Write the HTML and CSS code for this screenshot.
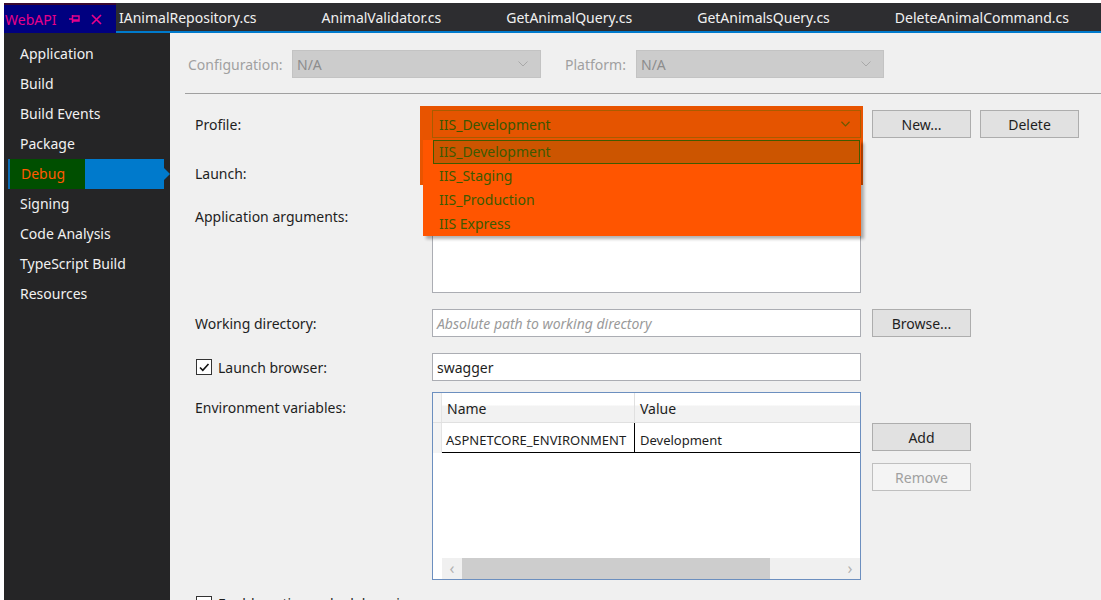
FILE: index.html
```html
<!DOCTYPE html>
<html>
<head>
<meta charset="utf-8">
<link rel="stylesheet" href="styles.css">
</head>
<body>
<div class="window">
  <div class="tabbar">
    <div class="tab-active">
      <span class="tab-active-title">WebAPI</span>
      <svg class="pin" width="13" height="12" viewBox="0 0 13 12"><path d="M1 6h3.5M4.5 2v8M4.5 3h6.5v5H4.5M4.5 7h6.5" stroke="#e8008a" stroke-width="1.5" fill="none"/></svg>
      <svg class="close" width="13" height="13" viewBox="0 0 13 13"><path d="M2 2l9 9M11 2l-9 9" stroke="#e8008a" stroke-width="1.7"/></svg>
    </div>
    <div class="tabs">
      <span class="tab">IAnimalRepository.cs</span>
      <span class="tab">AnimalValidator.cs</span>
      <span class="tab">GetAnimalQuery.cs</span>
      <span class="tab">GetAnimalsQuery.cs</span>
      <span class="tab">DeleteAnimalCommand.cs</span>
    </div>
  </div>
  <div class="main">
    <nav class="sidebar">
      <div class="nav-item">Application</div>
      <div class="nav-item">Build</div>
      <div class="nav-item">Build Events</div>
      <div class="nav-item">Package</div>
      <div class="nav-item nav-selected"><span class="nav-sel-text">Debug</span><span class="nav-arrow"></span></div>
      <div class="nav-item">Signing</div>
      <div class="nav-item">Code Analysis</div>
      <div class="nav-item">TypeScript Build</div>
      <div class="nav-item">Resources</div>
    </nav>
    <section class="content">
      <div class="config-row">
        <span class="dim-label">Configuration:</span>
        <div class="combo combo-disabled combo-config"><span>N/A</span><svg class="chev" width="10" height="6" viewBox="0 0 10 6"><path d="M0.5 0.5l4.5 4.5 4.5-4.5" stroke="#a8a8a8" fill="none"/></svg></div>
        <span class="dim-label platform-label">Platform:</span>
        <div class="combo combo-disabled combo-platform"><span>N/A</span><svg class="chev" width="10" height="6" viewBox="0 0 10 6"><path d="M0.5 0.5l4.5 4.5 4.5-4.5" stroke="#a8a8a8" fill="none"/></svg></div>
      </div>
      <div class="sep"></div>
      <div class="form">
        <div class="row row-profile">
          <span class="label">Profile:</span>
          <div class="combo-slot">
            <div class="profile-glow"></div>
            <div class="combo combo-profile"><span>IIS_Development</span><svg class="chev" width="9" height="6" viewBox="0 0 10 6"><path d="M0.5 0.5l4.5 4.5 4.5-4.5" stroke="#6a5a00" stroke-width="1.3" fill="none"/></svg></div>
            <div class="dropdown">
              <div class="dd-item dd-selected">IIS_Development</div>
              <div class="dd-item">IIS_Staging</div>
              <div class="dd-item">IIS_Production</div>
              <div class="dd-item">IIS Express</div>
            </div>
          </div>
          <button class="btn">New...</button>
          <button class="btn">Delete</button>
        </div>
        <div class="row row-launch">
          <span class="label">Launch:</span>
          <div class="combo combo-plain"></div>
        </div>
        <div class="row row-args">
          <span class="label label-top">Application arguments:</span>
          <div class="textarea"></div>
        </div>
        <div class="row row-wd">
          <span class="label">Working directory:</span>
          <div class="input placeholder">Absolute path to working directory</div>
          <button class="btn">Browse...</button>
        </div>
        <div class="row row-lb">
          <span class="label check-label"><span class="checkbox checked"><svg width="12" height="12" viewBox="0 0 12 12"><path d="M2 6.5l2.8 2.8L10.5 3" stroke="#111" stroke-width="1.6" fill="none"/></svg></span>Launch browser:</span>
          <div class="input">swagger</div>
        </div>
        <div class="row row-env">
          <span class="label label-top">Environment variables:</span>
          <div class="grid">
            <div class="grid-head">
              <div class="rowhead"></div>
              <div class="gh-cell gh-name">Name</div>
              <div class="gh-cell gh-value">Value</div>
            </div>
            <div class="grid-row">
              <div class="rowhead"></div>
              <div class="g-cell g-name">ASPNETCORE_ENVIRONMENT</div>
              <div class="g-cell g-value">Development</div>
            </div>
            <div class="grid-body"></div>
            <div class="hscroll">
              <span class="sc-arrow">&lsaquo;</span>
              <div class="sc-track"><div class="sc-thumb"></div></div>
              <span class="sc-arrow">&rsaquo;</span>
            </div>
          </div>
          <div class="env-buttons">
            <button class="btn">Add</button>
            <button class="btn btn-disabled">Remove</button>
          </div>
        </div>
        <div class="row row-native">
          <span class="label check-label"><span class="checkbox"></span>Enable native code debugging</span>
        </div>
      </div>
    </section>
  </div>
</div>
</body>
</html>
```
FILE: styles.css
```css
* { box-sizing: border-box; }
html, body { margin: 0; padding: 0; background: #ffffff; overflow: hidden; }
body { font-family: "Noto Sans", "Open Sans", sans-serif; font-size: 14px; }
.window { padding: 3px 0 0 4px; height: 600px; display: flex; flex-direction: column; }

.tabbar { display: flex; height: 30px; background: #2d2d30; }
.tab-active { width: 112px; background: #000080; border-top: 2px solid #3b0a2e; display: flex; align-items: center; padding-left: 1px; color: #e8008a; font-size: 14px; }
.tab-active-title { margin-right: 12px; }
.tab-active .pin { margin-right: 9px; }
.tabs { flex: 1; display: flex; border-bottom: 2px solid #007acc; padding-left: 3px; gap: 65px; align-items: center; }
.tab { color: #f1f1f1; font-size: 14px; white-space: nowrap; padding-top: 1px; }

.main { flex: 1; display: flex; min-height: 0; }
.sidebar { width: 166px; background: #252526; padding-top: 6px; display: flex; flex-direction: column; }
.nav-item { height: 30px; line-height: 30px; color: #f1f1f1; padding-left: 16px; font-size: 14px; }
.nav-selected { position: relative; margin-left: 4px; margin-right: 6px; padding-left: 0; background: #007acc; border-left: 2px solid #0a6ab0; }
.nav-sel-text { display: inline-block; width: 75px; height: 30px; background: #004f00; color: #ff5a00; padding-left: 11px; }
.nav-arrow { position: absolute; right: -6px; top: 9px; width: 0; height: 0; border-top: 6px solid transparent; border-bottom: 6px solid transparent; border-left: 6px solid #007acc; }

.content { flex: 1; background: #f0f0f0; position: relative; padding-top: 17px; }
.config-row { display: flex; align-items: center; height: 28px; padding-left: 18px; }
.dim-label { color: #a0a0a0; width: 104px; }
.platform-label { width: 71px; margin-left: 24px; }
.combo { height: 28px; display: flex; align-items: center; justify-content: space-between; padding: 0 6px 0 4px; }
.combo-disabled { background: #cccccc; border: 1px solid #c3c3c3; color: #8d8d8d; }
.combo-config { width: 249px; }
.combo-platform { width: 248px; }
.chev { margin-right: 6px; }
.sep { height: 1px; background: #a0a0a0; margin: 15px 0 0 15px; }

.form { padding-left: 25px; padding-top: 16px; }
.row { display: flex; align-items: center; }
.label { width: 237px; color: #1e1e1e; flex-shrink: 0; }
.btn { font-family: inherit; font-size: 14px; width: 99px; height: 28px; background: #e1e1e1; border: 1px solid #adadad; color: #1e1e1e; padding: 0; margin-left: 11px; }
.row-profile .btn + .btn { margin-left: 9px; }
.btn-disabled { background: #f4f4f4; border-color: #bfbfbf; color: #a0a0a0; }

.combo-slot { position: relative; width: 429px; height: 28px; }
.profile-glow { position: absolute; left: -12px; top: -4px; width: 443px; height: 79px; background: #e85400; }
.combo-profile { position: absolute; inset: 0; background: #e55400; border: 1px solid #a85c00; color: #3a5600; padding-left: 6px; }
.combo-profile .chev { margin-right: 4px; }
.dropdown { position: absolute; left: -9px; top: 30px; width: 438px; height: 96px; background: #ff5500; padding-left: 10px; box-shadow: 3px 3px 3px rgba(0,0,0,0.3); z-index: 3; }
.dd-item { height: 24px; line-height: 24px; color: #3d5a00; padding-left: 6px; width: 427px; }
.dd-selected { background: #cc5500; border: 1px solid #405a00; padding-left: 5px; line-height: 22px; }

.row-launch { margin-top: 21px; height: 28px; }
.combo-plain { width: 429px; background: #ffffff; border: 1px solid #abadb3; }
.row-args { margin-top: 16px; align-items: flex-start; }
.label-top { padding-top: 4px; }
.textarea { width: 429px; height: 90px; background: #ffffff; border: 1px solid #abadb3; }

.row-wd { margin-top: 16px; }
.input { width: 429px; height: 28px; background: #ffffff; border: 1px solid #abadb3; display: flex; align-items: center; padding-left: 4px; color: #1e1e1e; }
.placeholder { color: #9a9a9a; font-style: italic; }
.row-lb { margin-top: 16px; }
.check-label { display: flex; align-items: center; padding-left: 1px; }
.checkbox { width: 16px; height: 16px; border: 1px solid #333; background: #fff; margin-right: 6px; display: flex; align-items: center; justify-content: center; flex-shrink: 0; }

.row-env { margin-top: 11px; align-items: flex-start; }
.row-env .label-top { padding-top: 6px; }
.grid { width: 429px; height: 188px; background: #ffffff; border: 1px solid #6c8fbf; display: flex; flex-direction: column; }
.grid-head { display: flex; height: 30px; background: linear-gradient(#ffffff 0, #ffffff 12px, #f2f2f2 13px, #f2f2f2 100%); border-bottom: 1px solid #e0e0e0; }
.rowhead { width: 9px; background: #f4f4f4; border-right: 1px solid #e4e4e4; }
.gh-cell { display: flex; align-items: center; padding-left: 5px; padding-top: 1px; color: #1e1e1e; }
.gh-name { width: 193px; border-right: 1px solid #e0e0e0; }
.gh-value { flex: 1; }
.grid-row { display: flex; height: 30px; }
.g-cell { display: flex; align-items: center; padding-top: 4px; border-bottom: 1.5px solid #000; font-size: 13px; color: #1e1e1e; }
.g-name { width: 193px; padding-left: 4px; border-right: 1.5px solid #000; }
.g-value { flex: 1; padding-left: 5px; }
.grid-body { flex: 1; }
.hscroll { height: 21px; display: flex; align-items: center; background: #f0f0f0; margin-left: 9px; }
.sc-arrow { width: 20px; text-align: center; color: #b0b0b0; font-size: 16px; line-height: 21px; }
.sc-track { flex: 1; height: 21px; }
.sc-thumb { width: 308px; height: 21px; background: #cdcdcd; }
.env-buttons { display: flex; flex-direction: column; gap: 12px; padding-top: 31px; }

.row-native { margin-top: 14px; }
```
